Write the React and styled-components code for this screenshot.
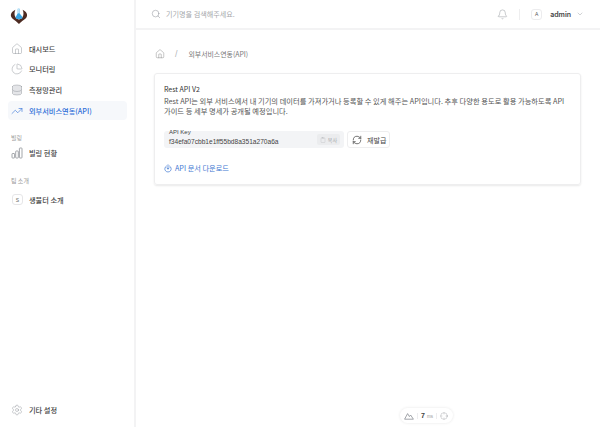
import React from "react";
import styled, { createGlobalStyle } from "styled-components";
import { Home, Search, Bell, ChevronDown, TrendingUp, Database, ChartPie, Settings, RefreshCw, Clipboard, Crosshair } from "lucide-react";

const GlobalStyle = createGlobalStyle`
  html, body { margin: 0; padding: 0; height: 100%; background: #fff; }
  #root { height: 100%; }
  * { box-sizing: border-box; }
  body { font-family: "Noto Sans CJK KR", "Noto Sans", sans-serif; color: #333; }
`;

const Page = styled.div`
  display: flex;
  width: 600px;
  height: 427px;
  overflow: hidden;
  position: relative;
`;

const Sidebar = styled.aside`
  width: 136px;
  flex-shrink: 0;
  border-right: 2px solid #f3f3f4;
  display: flex;
  flex-direction: column;
  padding: 5px 7px 0 8px;
`;

const Logo = styled.div`
  height: 29px;
  padding: 2px 0 0 2px;
  margin-bottom: 5px;
  display: flex;
  align-items: flex-start;
`;

const NavGroup = styled.nav`
  display: flex;
  flex-direction: column;
  gap: 1.7px;
`;

const NavItem = styled.div`
  display: flex;
  align-items: center;
  gap: 6px;
  height: 19px;
  padding-left: 3px;
  border-radius: 4px;
  font-size: 7.2px;
  font-weight: 500;
  white-space: nowrap;
  color: ${(p) => (p.$active ? "#2f6fd8" : "#444")};
  background: ${(p) => (p.$active ? "#f6f8fb" : "transparent")};
  svg { color: ${(p) => (p.$active ? "#2f6fd8" : "#8b8f96")}; flex-shrink: 0; }
`;

const SectionLabel = styled.div`
  font-size: 6px;
  color: #999;
  padding-left: 3px;
  margin-top: ${(p) => p.$top}px;
  margin-bottom: ${(p) => p.$bottom}px;
  line-height: 10px;
`;

const Badge = styled.span`
  width: 11px;
  height: 11px;
  margin-left: 1px;
  border: 1px solid #e6e6e8;
  border-radius: 3px;
  display: flex;
  align-items: center;
  justify-content: center;
  font-size: 5px;
  color: #666;
  font-family: "Liberation Sans", sans-serif;
`;

const SidebarFoot = styled.div`
  margin-top: auto;
  margin-bottom: 8px;
`;

const Main = styled.div`
  flex: 1;
  display: flex;
  flex-direction: column;
  min-width: 0;
`;

const Header = styled.header`
  height: 30px;
  flex-shrink: 0;
  border-bottom: 2px solid #f3f3f4;
  display: flex;
  align-items: center;
  padding: 0 16px 0 15px;
`;

const SearchHint = styled.span`
  font-size: 7.1px;
  color: #a5a7ab;
  margin-left: 5px;
  flex: 1;
`;

const Divider = styled.span`
  width: 1px;
  height: 11px;
  background: #eeeeef;
  margin: 0 11px;
`;

const Avatar = styled.span`
  width: 11px;
  height: 11px;
  border: 1px solid #ececee;
  border-radius: 3px;
  display: flex;
  align-items: center;
  justify-content: center;
  font-size: 5px;
  color: #555;
  font-family: "Liberation Sans", sans-serif;
`;

const UserName = styled.span`
  font-family: "Inter", sans-serif;
  font-size: 7px;
  font-weight: 600;
  color: #444;
  margin: 0 5px 0 8px;
`;

const Content = styled.main`
  padding: 17px 19px 0 18px;
`;

const Crumbs = styled.div`
  display: flex;
  align-items: center;
  height: 14px;
  font-size: 6.9px;
  color: #777;
  padding-left: 1px;
`;

const CrumbSlash = styled.span`
  color: #b5b7bb;
  margin: 0 11px 0 10px;
  font-size: 9px;
  font-family: "Liberation Sans", sans-serif;
`;

const Card = styled.section`
  margin-top: 12px;
  height: 112px;
  border: 1px solid #eeeeef;
  border-radius: 3px;
  box-shadow: 0 1px 2px rgba(0, 0, 0, 0.09);
  padding: 10px 9px 0;
`;

const CardTitle = styled.h2`
  margin: 0;
  font-size: 7px;
  font-weight: 400;
  line-height: 11px;
  color: #333;
`;

const CardText = styled.p`
  margin: 2px 0 0;
  font-size: 7.27px;
  line-height: 9.6px;
  color: #555;
  white-space: nowrap;
`;

const KeyRow = styled.div`
  display: flex;
  gap: 3px;
  margin-top: 15px;
`;

const KeyField = styled.div`
  position: relative;
  width: 180px;
  height: 17px;
  background: #f3f4f6;
  border-radius: 3px;
  display: flex;
  align-items: center;
  justify-content: space-between;
  padding: 3px 4px 0 5px;
`;

const KeyLabel = styled.span`
  position: absolute;
  left: 5px;
  top: -3px;
  font-family: "Liberation Sans", sans-serif;
  font-size: 6px;
  line-height: 8px;
  color: #444;
`;

const KeyValue = styled.span`
  font-family: "Liberation Sans", sans-serif;
  font-size: 6.6px;
  color: #444;
`;

const CopyButton = styled.span`
  display: flex;
  align-items: center;
  gap: 2px;
  height: 11px;
  margin-top: -3px;
  padding: 0 3px;
  background: #ebecee;
  border-radius: 2px;
  font-size: 5px;
  color: #a2a4a8;
`;

const ReissueButton = styled.button`
  display: flex;
  align-items: center;
  gap: 5px;
  width: 43px;
  height: 17px;
  padding: 0 0 0 4px;
  background: #fff;
  border: 1px solid #eeeeef;
  border-radius: 3px;
  font: 400 7px "Noto Sans CJK KR", sans-serif;
  color: #444;
  white-space: nowrap;
`;

const DownloadLink = styled.a`
  display: flex;
  align-items: center;
  gap: 3px;
  margin-top: 15px;
  font-size: 7.2px;
  color: #3f78d2;
`;

const LatencyPill = styled.div`
  position: absolute;
  left: 400px;
  top: 408px;
  width: 53px;
  height: 15px;
  border-radius: 8px;
  background: #fff;
  box-shadow: 0 0 3px rgba(0, 0, 0, 0.1);
  display: flex;
  align-items: center;
  justify-content: space-between;
  padding: 0 5px 0 4px;
  color: #8b8f96;
`;

const LatencyText = styled.span`
  font-family: "Liberation Sans", sans-serif;
  font-size: 7px;
  font-weight: 700;
  color: #444;
  small { font-size: 4.5px; font-weight: 400; color: #999; margin-left: 2px; }
`;

const Tick = styled.span`
  width: 1px;
  height: 6px;
  background: #ededef;
`;

const LogoMark = () => (
  <svg width="18" height="18" viewBox="0 0 20 20">
    <path d="M6 3 C2 5 0 8 1.5 11 C3 14 7 15 10 19 C13 15 17 14 18.5 11 C20 8 18 5 14 3 C16 7 15 13 10 14 C5 13 4 7 6 3 Z" fill="#4d2b22" />
    <path d="M8.6 2 H10.6 V7 L14 11.5 C14 13.2 12 13.6 10 13.6 C8 13.6 6.2 13.2 6.2 11.5 L8.6 7 Z" fill="#3aa6e4" />
    <rect x="8.6" y="2" width="2" height="5" fill="#bfe4f7" />
  </svg>
);

const GaugeIcon = () => <ChartPie size={12} strokeWidth={0.9} />;

const CylinderIcon = () => <Database size={12} strokeWidth={0.9} fill="#e4e5e8" />;

const BarsIcon = () => (
  <svg width="12" height="12" viewBox="0 0 12 12" fill="none" stroke="#8b8f96" strokeWidth="0.8">
    <rect x="1" y="6.5" width="2.6" height="4.5" rx="0.6" />
    <rect x="4.7" y="4" width="2.6" height="7" rx="0.6" />
    <rect x="8.4" y="1" width="2.6" height="10" rx="0.6" />
  </svg>
);

const DownloadIcon = () => (
  <svg width="8" height="9" viewBox="0 0 8 9" fill="none" stroke="#3f78d2" strokeWidth="0.7" strokeLinecap="round">
    <path d="M2.4 2 A3.2 3.2 0 1 0 5.6 2" />
    <path d="M4 .8 V5 M2.8 3.9 L4 5.1 L5.2 3.9" />
  </svg>
);

const PeaksIcon = () => (
  <svg width="10" height="8" viewBox="0 0 10 8" fill="none" stroke="#8b8f96" strokeWidth="0.8" strokeLinejoin="round">
    <path d="M.6 7.2 L3.6 1.6 L5.4 4.6 L6.6 3 L9.4 7.2 Z" />
  </svg>
);

const App = () => (
  <Page>
    <GlobalStyle />
    <Sidebar>
      <Logo><LogoMark /></Logo>
      <NavGroup>
        <NavItem><Home size={12} strokeWidth={0.9} />대시보드</NavItem>
        <NavItem><GaugeIcon />모니터링</NavItem>
        <NavItem><CylinderIcon />측정망관리</NavItem>
        <NavItem $active><TrendingUp size={12} strokeWidth={1.2} />외부서비스연동(API)</NavItem>
      </NavGroup>
      <SectionLabel $top={13} $bottom={0}>빌링</SectionLabel>
      <NavItem><BarsIcon />빌링 현황</NavItem>
      <SectionLabel $top={13.5} $bottom={4.5}>팀 소개</SectionLabel>
      <NavItem><Badge>S</Badge>생물터 소개</NavItem>
      <SidebarFoot>
        <NavItem><Settings size={12} strokeWidth={0.9} />기타 설정</NavItem>
      </SidebarFoot>
    </Sidebar>
    <Main>
      <Header>
        <Search size={10} strokeWidth={1.2} color="#8b8f96" />
        <SearchHint>기기명을 검색해주세요.</SearchHint>
        <Bell size={11} strokeWidth={1} color="#8b8f96" />
        <Divider />
        <Avatar>A</Avatar>
        <UserName>admin</UserName>
        <ChevronDown size={8} strokeWidth={1.2} color="#8b8f96" />
      </Header>
      <Content>
        <Crumbs>
          <Home size={10} strokeWidth={1} color="#777" />
          <CrumbSlash>/</CrumbSlash>
          외부서비스연동(API)
        </Crumbs>
        <Card>
          <CardTitle>Rest API V2</CardTitle>
          <CardText>
            Rest API는 외부 서비스에서 내 기기의 데이터를 가져가거나 등록할 수 있게 해주는 API입니다. 추후 다양한 용도로 활용 가능하도록 API
            <br />
            가이드 등 세부 명세가 공개될 예정입니다.
          </CardText>
          <KeyRow>
            <KeyField>
              <KeyLabel>API Key</KeyLabel>
              <KeyValue>f34efa07cbb1e1ff55bd8a351a270a6a</KeyValue>
              <CopyButton><Clipboard size={6} strokeWidth={1} />복사</CopyButton>
            </KeyField>
            <ReissueButton><RefreshCw size={10} strokeWidth={1.6} color="#333" />재발급</ReissueButton>
          </KeyRow>
          <DownloadLink><DownloadIcon />API 문서 다운로드</DownloadLink>
        </Card>
      </Content>
    </Main>
    <LatencyPill>
      <PeaksIcon />
      <Tick />
      <LatencyText>7<small>ms</small></LatencyText>
      <Tick />
      <Crosshair size={8} strokeWidth={1} />
    </LatencyPill>
  </Page>
);

export default App;
